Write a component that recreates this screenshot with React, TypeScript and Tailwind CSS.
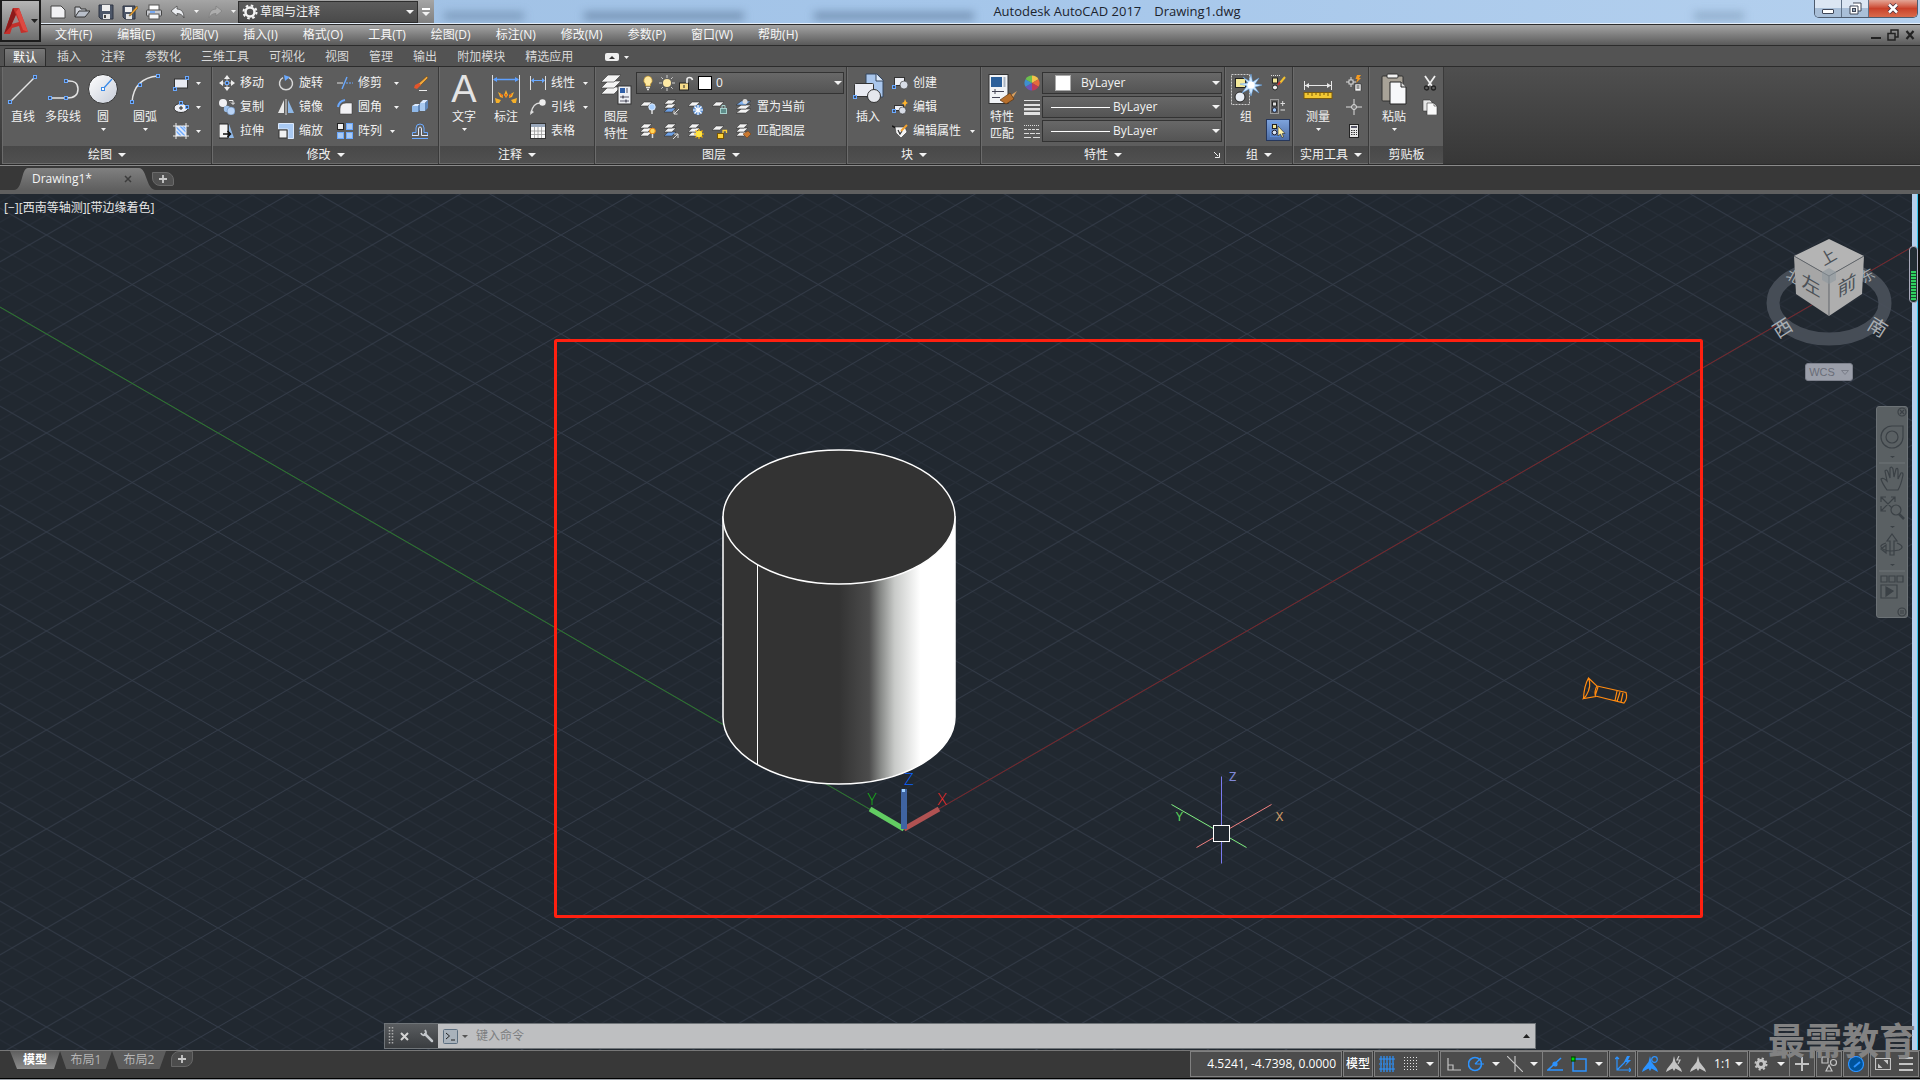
import { ReactNode } from 'react';

const MINOR = [-4, -3, -2, -1, 1, 2, 3, 4];
const GRID_W = 171.5;
const GRID_H = 99;

const BLUE = '#6aa9ff';

function Arrow({ big = false }: { big?: boolean }) {
  return (
    <svg width={big ? 8 : 5} height={big ? 4 : 3} viewBox="0 0 8 4" preserveAspectRatio="none" className="shrink-0">
      <path d="M0 0H8L4 4Z" fill="#f2f2f2" />
    </svg>
  );
}

function Grip({ x, y }: { x: number; y: number }) {
  return <rect x={x - 1.5} y={y - 1.5} width="3" height="3" fill="#3d4d66" stroke={BLUE} />;
}

function Sheet({ x = 0, y = 0, fill = '#f4f4f4', w = 12, h = 4 }: { x?: number; y?: number; fill?: string; w?: number; h?: number }) {
  return (
    <path
      d={`M${x + w * 0.35} ${y}H${x + w}L${x + w * 0.65} ${y + h}H${x}Z`}
      fill={fill}
      stroke="#333"
      strokeWidth="0.6"
    />
  );
}

function Stack({ fill = '#f4f4f4' }: { fill?: string }) {
  return (
    <g>
      <Sheet y={9} fill={fill} />
      <Sheet y={5} />
      <Sheet y={1} />
    </g>
  );
}

const sun = 'M0-5V5M-5 0H5M-3.5-3.5L3.5 3.5M3.5-3.5L-3.5 3.5';

const small: Record<string, ReactNode> = {
  rect: (
    <>
      <rect x="1.5" y="4" width="13" height="9" fill="#e9ebf2" stroke="#333" />
      <Grip x={2} y={14} />
      <Grip x={14} y={3} />
    </>
  ),
  ellipse: (
    <>
      <ellipse cx="8" cy="9" rx="7" ry="4.5" fill="#eceef4" stroke="#333" />
      <path d="M6 9H10M8 7V11" stroke="#222" />
      <Grip x={8} y={4} />
      <Grip x={14} y={8} />
    </>
  ),
  hatch: (
    <>
      <rect x="3" y="3" width="10" height="10" fill="#dfe8f8" />
      <path d="M3 8L8 13M3 4L12 13M7 3L13 9M10 3L13 6" stroke={BLUE} strokeWidth="1.4" />
      <path d="M3 0V16M13 0V16M0 3H16M0 13H16" stroke="#eee" />
    </>
  ),
  move: (
    <>
      <path d="M8 0L11 4H5ZM8 16L11 12H5ZM0 8L4 5V11ZM16 8L12 5V11Z" fill="#eee" />
      <path d="M8 4V6M8 10V12M4 8H6M10 8H12" stroke="#ccc" />
      <Grip x={8} y={8} />
    </>
  ),
  rotate: (
    <>
      <path d="M11 2.6A6.5 6.5 0 1 1 5 2.6" fill="none" stroke="#d8d8d8" strokeWidth="1.5" />
      <path d="M6 0L12 2L7 6Z" fill={BLUE} />
    </>
  ),
  trim: (
    <>
      <path d="M0 8H6" stroke="#ddd" />
      <path d="M5 14L10 2" stroke={BLUE} strokeWidth="1.4" />
      <path d="M9 8H16" stroke={BLUE} strokeDasharray="2 1" />
    </>
  ),
  erase: (
    <>
      <path d="M15 1L6 9L8 11L16 3Z" fill="#f0a83c" stroke="#5d3a10" strokeWidth="0.5" />
      <path d="M7 8L9 10L5 14L2 13L3 10Z" fill="#e3552b" />
      <path d="M7 15.5H15" stroke="#eee" />
    </>
  ),
  copy: (
    <>
      <circle cx="4" cy="4" r="4" fill="#f0f0f3" />
      <circle cx="8" cy="10" r="3.2" fill="#9dc0ea" />
      <circle cx="12" cy="12" r="4" fill="#b9d3f4" stroke="#5a7faf" strokeWidth="0.5" />
      <path d="M10 1.5H14V5M12 3.5L14 5.5L16 3.5" fill="none" stroke="#eee" />
    </>
  ),
  mirror: (
    <>
      <path d="M6 1V14H0Z" fill="#e9e9e9" />
      <path d="M10 1V14H16Z" fill="#8fb8e6" />
      <path d="M8 0V16" stroke="#ddd" />
    </>
  ),
  fillet: (
    <>
      <path d="M3 15V10Q3 4 9 4H15V15Z" fill="#f1f1f4" stroke="#333" strokeWidth="0.5" />
      <path d="M1 8Q2 2 8 1" fill="none" stroke={BLUE} strokeWidth="2" />
    </>
  ),
  explode: (
    <>
      <path d="M0 7L3 5H8L6 7Z" fill="#dcebff" />
      <path d="M0 7H6V13H0Z" fill="#8fb8e8" />
      <path d="M6 7L8 5V11L6 13Z" fill="#5f86b8" />
      <path d="M8 4L11 1H16L13 4Z" fill="#dcebff" />
      <path d="M8 4H13V12H8Z" fill="#a9caf0" />
      <path d="M13 4L16 1V9L13 12Z" fill="#5f86b8" />
    </>
  ),
  stretch: (
    <>
      <path d="M0 1H9V15H0Z" fill="#f3f3f3" stroke="#222" />
      <path d="M10 1L15 15H10Z" fill="#8fb8e8" />
      <path d="M4 11H11M8.500 8L11.500 11L8.500 14" stroke="#111" fill="none" strokeWidth="1.5" />
    </>
  ),
  scale: (
    <>
      <path d="M0.500 0.500H15.500V15.500H10V6H0.500Z" fill="#a9c9f2" stroke="#dbe8fb" />
      <rect x="1" y="7" width="8" height="8" fill="#f2f2f2" stroke="#333" />
    </>
  ),
  array: (
    <>
      <rect x="0.500" y="0.500" width="6" height="6" fill="#f0f0f0" stroke="#222" />
      <rect x="9.500" y="0.500" width="6" height="6" fill="#a9c9f2" stroke={BLUE} />
      <rect x="0.500" y="9.500" width="6" height="6" fill="#a9c9f2" stroke={BLUE} />
      <rect x="9.500" y="9.500" width="6" height="6" fill="#a9c9f2" stroke={BLUE} />
    </>
  ),
  offset: (
    <>
      <path d="M0 15.500H16M0.500 12.500V9.500H4V5Q4 1 8 1T12 5V9.500H15.500V12.500" fill="none" stroke={BLUE} />
      <path d="M0 12.500H6.500V6Q6.500 4 8 4T9.500 6V12.500H16" fill="none" stroke="#dfe8f8" />
    </>
  ),
  linear: (
    <>
      <path d="M0.500 1V15M15.500 1V15" stroke="#ddd" />
      <path d="M2 5.500H14" stroke={BLUE} />
      <path d="M1 5.500L4 3V8ZM15 5.500L12 3V8Z" fill={BLUE} />
    </>
  ),
  leader: (
    <>
      <path d="M1 14Q3 4 10 4" fill="none" stroke="#ddd" strokeWidth="1.300" />
      <path d="M0 16L1 11L4 13Z" fill="#ddd" />
      <circle cx="12.500" cy="3.500" r="3.200" fill="#eee" />
    </>
  ),
  table: (
    <>
      <rect x="0.500" y="0.500" width="15" height="15" fill="#fafafa" stroke="#333" />
      <rect x="1" y="1" width="14" height="3" fill="#9aa8bb" />
      <path d="M1 8H15M1 11.500H15M4.500 4V15M8 4V15M11.500 4V15" stroke="#999" strokeWidth="0.800" />
    </>
  ),
  layoff: (
    <>
      <Sheet x={0} y={3} />
      <circle cx="12" cy="8" r="3.200" fill="#a9d0ff" stroke="#dcebff" />
      <path d="M12 11V15" stroke="#ddd" strokeWidth="1.500" />
    </>
  ),
  layiso: (
    <>
      <Stack fill="#6ea2e8" />
      <path d="M15 10L10 15M10 11.500V15H13.500" stroke="#ddd" fill="none" />
    </>
  ),
  layfreeze: (
    <>
      <Sheet x={0} y={3} />
      <circle cx="10" cy="11" r="5" fill="#5d92d8" />
      <path d={sun} transform="translate(10 11)" stroke="#fff" strokeWidth="1.200" />
    </>
  ),
  laylock: (
    <>
      <Sheet x={0} y={3} />
      <rect x="8.500" y="9.500" width="6" height="5" fill="#5f8d8a" stroke="#a5d0cc" />
      <path d="M10 9V6.500H13V9" stroke="#a5d0cc" fill="none" />
    </>
  ),
  laycur: (
    <>
      <Sheet y={10} w={15} />
      <Sheet y={6} w={15} />
      <Sheet y={2} w={15} fill="#7db0f0" />
      <circle cx="9" cy="2.500" r="2.500" fill="#ddd" />
    </>
  ),
  layon: (
    <>
      <Stack />
      <circle cx="12.500" cy="8" r="2.800" fill="#ffd75a" stroke="#f08a10" />
      <path d="M12.500 11V15" stroke="#ddd" strokeWidth="1.500" />
    </>
  ),
  layuniso: (
    <>
      <Stack fill="#6ea2e8" />
      <path d="M9 16L14 11M10 11H14V15" stroke="#ddd" fill="none" />
    </>
  ),
  laythaw: (
    <>
      <Stack />
      <path d={sun} transform="translate(11 11)" stroke="#f5a800" strokeWidth="1.200" />
      <circle cx="11" cy="11" r="3.200" fill="#ffe640" />
    </>
  ),
  layunlock: (
    <>
      <Sheet x={0} y={3} />
      <rect x="5.500" y="10.500" width="6" height="5" fill="#ffd23a" stroke="#7a5600" />
      <path d="M11 10V7.500H14.500V10" stroke="#ffd23a" fill="none" strokeWidth="1.300" />
    </>
  ),
  laymatch: (
    <>
      <Stack />
      <path d="M7 11L12 8L15 11L11 15Z" fill="#c97830" stroke="#6b3a10" strokeWidth="0.500" />
    </>
  ),
  create: (
    <>
      <rect x="2.500" y="2.500" width="10" height="8" fill="#eceef4" stroke="#333" />
      <circle cx="12" cy="10" r="4" fill="#d7dce6" stroke="#333" strokeWidth="0.600" />
      <Grip x={2} y={12} />
    </>
  ),
  edit: (
    <>
      <rect x="2.500" y="6.500" width="9" height="5" fill="#eceef4" stroke="#333" />
      <circle cx="10.500" cy="11.500" r="3.500" fill="#d7dce6" stroke="#333" strokeWidth="0.600" />
      <path d="M13 0L14.300 3L16 4L14 5L13 8L11.700 5L9.500 4.300L12 3Z" fill="#ffb52e" />
      <Grip x={2} y={12} />
    </>
  ),
  attr: (
    <>
      <path d="M0 3L4 5" stroke="#111" strokeWidth="1.500" />
      <path d="M3 4H13L15 9L9 15L4 10Z" fill="#f3f3f3" stroke="#333" strokeWidth="0.600" />
      <path d="M6 7L8 11L10 8" fill="none" stroke="#333" strokeWidth="1.200" />
      <path d="M15 2L9 8" stroke="#f0a030" strokeWidth="2" />
    </>
  ),
  wheel: (
    <>
      <path d="M8 8V0.500A7.500 7.500 0 0 1 14.500 4.200Z" fill="#f2c24a" />
      <path d="M8 8L14.500 4.200A7.500 7.500 0 0 1 14.500 11.800Z" fill="#e56a3d" />
      <path d="M8 8L14.500 11.800A7.500 7.500 0 0 1 8 15.500Z" fill="#c03a55" />
      <path d="M8 8V15.500A7.500 7.500 0 0 1 1.500 11.800Z" fill="#6a54b8" />
      <path d="M8 8L1.500 11.800A7.500 7.500 0 0 1 1.500 4.200Z" fill="#3f8fd0" />
      <path d="M8 8L1.500 4.200A7.500 7.500 0 0 1 8 0.500Z" fill="#6cc04e" />
    </>
  ),
  weights: <path d="M0 1H16V2H0ZM0 5H16V7H0ZM0 9H16V11.500H0ZM0 13H16V16H0Z" fill="#e2e2e2" />,
  types: (
    <>
      <path d="M0 2.500H16" stroke="#ddd" strokeDasharray="1 1" />
      <path d="M0 6.500H16" stroke="#ddd" strokeDasharray="3 1" />
      <path d="M0 10.500H16" stroke="#ddd" strokeDasharray="5 1" />
      <path d="M0 14.500H16" stroke="#ddd" strokeDasharray="7 2" />
    </>
  ),
  gedit: (
    <>
      <path d="M1 0.500H10" stroke="#ddd" strokeDasharray="1 1" />
      <rect x="2.500" y="3" width="5" height="5" fill="#f3e99a" stroke="#222" />
      <circle cx="5" cy="12.500" r="2.500" fill="#f0f0f0" stroke="#222" />
      <path d="M15 2L10 8" stroke="#f0c030" strokeWidth="2" />
      <path d="M10 7L8 10" stroke="#d03030" strokeWidth="2" />
    </>
  ),
  gadd: (
    <>
      <rect x="0.500" y="0.500" width="8" height="14" fill="none" stroke="#ddd" strokeDasharray="1 1" />
      <rect x="2.500" y="3" width="4" height="4" fill="#ddd" stroke="#222" />
      <circle cx="4.500" cy="11" r="2.300" fill="#9cc4f4" stroke="#223" />
      <path d="M10.500 4.500H15M12.700 2V7M10.500 11H15" stroke="#ddd" />
    </>
  ),
  gsel: (
    <>
      <rect x="0.500" y="0.500" width="9" height="14" fill="none" stroke="#5ea0ff" strokeDasharray="1 1" />
      <rect x="2.500" y="2.500" width="4" height="4" fill="#f3e99a" stroke="#222" />
      <circle cx="4.500" cy="10.500" r="2.300" fill="#d8e4f4" stroke="#223" />
      <path d="M8 4V14L10.500 12L12 15.500L13.500 15L12.300 11.500H15Z" fill="#fff3a8" stroke="#222" strokeWidth="0.600" />
    </>
  ),
  quick: (
    <>
      <path d="M0 7H10M5 2V12" stroke="#ddd" />
      <rect x="3" y="5" width="4" height="4" fill="#555" stroke="#ddd" />
      <path d="M11 0H15L13 3H15L10 8L11.500 4H9.500Z" fill="#f59a20" />
      <rect x="9" y="9" width="6" height="7" fill="#f4f4f4" stroke="#222" strokeWidth="0.500" />
      <path d="M10.500 11H13.500M10.500 13H13.500" stroke="#333" />
    </>
  ),
  point: (
    <>
      <path d="M8 0V16M0 8H16" stroke="#ddd" />
      <circle cx="8" cy="8" r="2.500" fill="#777" stroke="#ddd" />
    </>
  ),
  calc: (
    <>
      <rect x="3.500" y="1.500" width="9" height="13" fill="#e8e8e8" stroke="#222" />
      <rect x="5" y="3" width="6" height="2" fill="#556" />
      <path d="M5 7.500H11M5 9.500H11M5 11.500H11" stroke="#333" strokeDasharray="1.500 1" />
    </>
  ),
  cut: (
    <>
      <path d="M3 1L10 11M13 1L6 11" stroke="#f0f0f0" strokeWidth="1.800" />
      <circle cx="4.500" cy="13" r="2" fill="none" stroke="#222" strokeWidth="1.300" />
      <circle cx="11.500" cy="13" r="2" fill="none" stroke="#222" strokeWidth="1.300" />
    </>
  ),
  copyclip: (
    <>
      <path d="M1 1H8L10 3V12H1Z" fill="#e6e6e6" stroke="#333" strokeWidth="0.600" />
      <path d="M5 4H12L15 7V16H5Z" fill="#fafafa" stroke="#333" strokeWidth="0.600" />
      <path d="M12 4V7H15" fill="none" stroke="#333" strokeWidth="0.600" />
    </>
  ),
  new: <path d="M1 2H11L15 6V14H1Z" fill="#f1f1f3" stroke="#444" />,
  open: (
    <>
      <path d="M1 13V3H6L7 5H12V7" fill="#cfd3da" stroke="#333" />
      <path d="M1 13L5 7H16L11 13Z" fill="#b9bfc9" stroke="#333" />
    </>
  ),
  save: (
    <>
      <path d="M1 1H15V15H3L1 13Z" fill="#4c5668" stroke="#2c3340" />
      <rect x="4" y="1" width="8" height="6" fill="#eee" />
      <rect x="5" y="10" width="7" height="5" fill="#e3e3e3" />
      <rect x="6" y="11" width="2" height="3" fill="#444" />
    </>
  ),
  saveas: (
    <>
      <path d="M1 2H13V15H3L1 13Z" fill="#4c5668" stroke="#2c3340" />
      <rect x="3" y="3" width="7" height="5" fill="#eee" />
      <rect x="4" y="10" width="6" height="5" fill="#e3e3e3" />
      <path d="M15 2L8 10L7 12L9 11.500L16 4Z" fill="#f0a030" stroke="#553" strokeWidth="0.500" />
    </>
  ),
  print: (
    <>
      <rect x="3" y="1" width="10" height="6" fill="#fff" stroke="#555" />
      <rect x="0.500" y="6" width="15" height="6" rx="1" fill="#c9cbd0" stroke="#444" />
      <rect x="3" y="10" width="10" height="5" fill="#f6f6f6" stroke="#555" />
      <path d="M4 8H9" stroke="#5ea0ff" strokeWidth="1.500" />
    </>
  ),
  undo: <path d="M1 7L7 2V5Q14 5 14 14Q12 9.500 7 9.500V12Z" fill="#eceef2" stroke="#444" strokeWidth="0.700" />,
  redo: <path d="M15 7L9 2V5Q2 5 2 14Q4 9.500 9 9.500V12Z" fill="#adadad" stroke="#7c7c7c" strokeWidth="0.700" />,
  gear: (
    <>
      <circle cx="8" cy="8" r="4.500" fill="none" stroke="#f4f4f4" strokeWidth="2.500" />
      <circle cx="8" cy="8" r="6.500" fill="none" stroke="#f4f4f4" strokeWidth="2" strokeDasharray="2.550 2.550" />
    </>
  ),
  bulb: (
    <>
      <path d="M8 1A4.500 4.500 0 0 1 10.500 9V11H5.500V9A4.500 4.500 0 0 1 8 1Z" fill="#ffe9a0" stroke="#b88a20" strokeWidth="0.600" />
      <path d="M6 12.500H10M7 14.500H9" stroke="#ddd" strokeWidth="1.300" />
    </>
  ),
  sun: (
    <>
      <path d="M8 0V3M8 13V16M0 8H3M13 8H16M2.300 2.300L4 4M12 12L13.700 13.700M13.700 2.300L12 4M4 12L2.300 13.700" stroke="#ddd" strokeWidth="0.900" />
      <circle cx="8" cy="8" r="4" fill="#ffeaa5" />
    </>
  ),
  lock: (
    <>
      <rect x="1.500" y="8" width="9" height="7" fill="#f7dc8a" stroke="#222" />
      <path d="M9 8V4.500Q9 2.500 11.500 2.500T14.500 5" fill="none" stroke="#eee" strokeWidth="1.600" />
      <path d="M6 10V13" stroke="#222" />
    </>
  ),
};

const large: Record<string, ReactNode> = {
  line: (
    <>
      <path d="M3 29L28 4" stroke="#e4e4e4" strokeWidth="1.500" />
      <Grip x={3} y={29} />
      <Grip x={28} y={4} />
    </>
  ),
  pline: (
    <>
      <path d="M3 25H20Q31 25 31 16T20 8" fill="none" stroke="#e4e4e4" strokeWidth="1.500" />
      <Grip x={3} y={25} />
      <Grip x={19} y={25} />
      <Grip x={19} y={8} />
    </>
  ),
  circle: (
    <>
      <circle cx="16" cy="16" r="14.500" fill="url(#disc)" stroke="#333" />
      <path d="M16 16L25 6" stroke="#3a8ae8" strokeWidth="1.300" />
      <rect x="14.500" y="14.500" width="3" height="3" fill="#fff" stroke="#3a8ae8" />
    </>
  ),
  arc: (
    <>
      <path d="M3 29Q5 5 29 3" fill="none" stroke="#e4e4e4" strokeWidth="1.500" />
      <Grip x={3} y={29} />
      <Grip x={11} y={12} />
      <Grip x={29} y={3} />
    </>
  ),
  dim: (
    <>
      <path d="M2.500 2V30M29.500 2V30" stroke="#ddd" />
      <path d="M4 6.500H28" stroke="#5ea0ff" strokeWidth="1.500" />
      <path d="M3 6.500L7 4V9ZM29 6.500L25 4V9Z" fill="#5ea0ff" />
      <path d="M16 17L18 22L16 25L14 22ZM8 19L13 22L13 25L10 24ZM24 19L19 22V25L22 24ZM5 25L11 27L9 30H6ZM27 25L21 27L23 30H26Z" fill="#f5b02a" />
      <path d="M15 21L16 25L17 21ZM10 21L13 25L12 21ZM22 21L19 25L20 21Z" fill="#e8601a" />
    </>
  ),
  layers: (
    <>
      <Sheet x={1} y={14} w={20} h={7} />
      <Sheet x={1} y={8} w={20} h={7} />
      <Sheet x={1} y={2} w={20} h={7} />
      <rect x="18" y="13" width="13" height="18" fill="#eef0f4" stroke="#333" />
      <rect x="20" y="15" width="5" height="5" fill="#2f5fa8" />
      <path d="M27 15V20M20 24H29M20 28H29" stroke="#556" />
      <path d="M23 22.500V25.500M26 26.500V29.500" stroke="#223" />
    </>
  ),
  insert: (
    <>
      <path d="M14 1H25L31 7V24H14Z" fill="#a9c6ec" stroke="#34465e" />
      <path d="M24 1V8H31" fill="#dfeaf9" stroke="#34465e" />
      <rect x="2.500" y="10.500" width="19" height="13" rx="1" fill="#e9ebf2" stroke="#333" />
      <circle cx="22" cy="23" r="6.500" fill="#e5e7ec" stroke="#333" />
      <Grip x={3} y={24} />
    </>
  ),
  match: (
    <>
      <rect x="3" y="1.500" width="19" height="29" fill="#f1f3f6" stroke="#333" />
      <rect x="5" y="4" width="11" height="10" fill="#2b5f9a" />
      <path d="M18.500 4V14" stroke="#aab4c2" strokeWidth="2" />
      <path d="M6 18.500H18M6 24.500H14M9 16V21" stroke="#445" />
      <path d="M31 18L25 22L27 24.500Z" fill="#d8a060" />
      <path d="M24 20L28 26L20 31L14 27Z" fill="#b8702c" stroke="#5c3410" strokeWidth="0.700" />
    </>
  ),
  group: (
    <>
      <rect x="1.500" y="1.500" width="18" height="30" fill="none" stroke="#ccc" strokeDasharray="2 1" />
      <rect x="5.500" y="5.500" width="10" height="9" fill="#f3e99a" stroke="#222" />
      <circle cx="10" cy="24" r="5" fill="#e9eef5" stroke="#222" />
      <path d="M21 1L22.500 9L29 5L25 11L32 12L25 14L29 20L23 16L21 23L19 16L12 20L17 13L10 11L18 10L13 4L19 8Z" fill="#cfe8ff" stroke="#5ea0e8" strokeWidth="0.500" />
      <circle cx="21" cy="12" r="3.500" fill="#fff" />
    </>
  ),
  measure: (
    <>
      <path d="M2.500 8V17M29.500 8V17M3 12.500H29" stroke="#e8e8e8" />
      <path d="M3 12.500L7 10V15ZM29 12.500L25 10V15Z" fill="#e8e8e8" />
      <rect x="2" y="19.500" width="28" height="6" fill="#f2c832" stroke="#7a5a10" />
      <path d="M6 20V22M10 20V23M14 20V22M18 20V23M22 20V22M26 20V23" stroke="#7a5a10" />
    </>
  ),
  paste: (
    <>
      <rect x="4" y="3" width="21" height="25" rx="1" fill="#a8a297" stroke="#333" />
      <rect x="9" y="1" width="11" height="4" rx="1" fill="#f2f2f2" stroke="#333" />
      <path d="M12 9H23L28 14V31H12Z" fill="#f7f8fa" stroke="#222" />
      <path d="M23 9V14H28" fill="#ddd" stroke="#222" />
    </>
  ),
};

function Icon({ name }: { name: string }) {
  return (
    <svg width="16" height="16" viewBox="0 0 16 16" className="shrink-0">
      {small[name]}
    </svg>
  );
}

function SmallButton({ icon, label, arrow }: { icon: string; label?: string; arrow?: boolean }) {
  return (
    <button aria-label={label ?? icon} className="flex h-6 shrink-0 items-center whitespace-nowrap">
      <Icon name={icon} />
      {label && <span className="ml-[5px]">{label}</span>}
      {arrow && (
        <span className="ml-auto">
          <Arrow />
        </span>
      )}
    </button>
  );
}

function BigButton({ icon, lines, arrow, className }: { icon: string; lines: string[]; arrow?: boolean; className: string }) {
  return (
    <button className={`flex shrink-0 flex-col items-center self-start pt-[6px] leading-[17px] ${className}`}>
      {icon === 'text' ? (
        <span className="h-8 font-['Liberation_Sans'] text-[38px] leading-8 text-[#e4e4e4]">A</span>
      ) : (
        <svg width="32" height="32" viewBox="0 0 32 32">
          {large[icon]}
        </svg>
      )}
      <span className="mt-[3px] flex flex-col">
        {lines.map((l) => (
          <span key={l}>{l}</span>
        ))}
      </span>
      {arrow && (
        <span className="mt-[2px] flex h-[5px] items-center">
          <Arrow />
        </span>
      )}
    </button>
  );
}

function Panel({ title, arrow = true, launcher, className, children }: {
  title: string;
  arrow?: boolean;
  launcher?: boolean;
  className: string;
  children: ReactNode;
}) {
  return (
    <section className={`flex shrink-0 flex-col border-r border-[#3a3a3a] bg-[#5d5d5d] ${className}`}>
      <div className="flex h-[79px] border-l border-[#6b6b6b]">{children}</div>
      <button className="relative flex h-[18px] items-center justify-center gap-[6px] border-b border-l border-[#6b6b6b] bg-linear-to-b from-[#484848] to-[#505050]">
        {title}
        {arrow && <Arrow big />}
        {launcher && (
          <svg width="6" height="6" className="absolute right-1">
            <path d="M0 0L4 4M5.500 1V5.500H1" stroke="#eee" fill="none" />
          </svg>
        )}
      </button>
    </section>
  );
}

function Combo({ label, value, className, children }: { label: string; value: string; className: string; children?: ReactNode }) {
  return (
    <label className={`flex items-center border border-[#333] bg-linear-to-b from-[#686868] to-[#545454] pr-px ${className}`}>
      {children}
      <select aria-label={label} className="min-w-0 flex-1 appearance-none bg-transparent text-[#f2f2f2] outline-none">
        <option>{value}</option>
      </select>
      <Arrow big />
    </label>
  );
}

const MENUS = ['文件(F)', '编辑(E)', '视图(V)', '插入(I)', '格式(O)', '工具(T)', '绘图(D)', '标注(N)', '修改(M)', '参数(P)', '窗口(W)', '帮助(H)'];
const TABS = ['插入', '注释', '参数化', '三维工具', '可视化', '视图', '管理', '输出', '附加模块', '精选应用'];

function TitleBar() {
  return (
    <div className="flex h-[24px] border-b border-[#e4eefa] bg-linear-to-r from-[#9fbfe2] via-[#a5c6ea] to-[#b4d0ee]">
      <div className="flex h-full items-center bg-linear-to-b from-[#a5a5a5] to-[#808080] pl-[50px]">
        {['new', 'open', 'save', 'saveas', 'print'].map((n) => (
          <button key={n} aria-label={n} className="mr-2">
            <Icon name={n} />
          </button>
        ))}
        <button aria-label="undo" className="mr-2 flex items-center gap-2">
          <Icon name="undo" />
          <Arrow />
        </button>
        <button aria-label="redo" className="mr-[2px] flex items-center gap-2">
          <Icon name="redo" />
          <Arrow />
        </button>
        <label className="flex h-[22px] w-[180px] items-center gap-[2px] border border-[#2e2e2e] bg-linear-to-b from-[#5c5c5c] to-[#4a4a4a] px-[3px]">
          <Icon name="gear" />
          <select aria-label="工作空间" className="min-w-0 flex-1 appearance-none bg-transparent text-[#f4f4f4] outline-none">
            <option>草图与注释</option>
          </select>
          <Arrow big />
        </label>
        <button aria-label="自定义" className="flex h-full w-[16px] flex-col items-center justify-center gap-[2px]">
          <span className="h-[2px] w-2 bg-white" />
          <Arrow big />
        </button>
      </div>
      <div className="relative flex flex-1 justify-center gap-[13px] overflow-hidden pr-[14px] text-[13px] leading-[23px] text-[#1c242e]">
        <span className="absolute top-[12px] left-[10px] h-2 w-[80px] bg-[#47627f]/40 blur-[4px]" />
        <span className="absolute top-[12px] left-[150px] h-2 w-[160px] bg-[#47627f]/50 blur-[4px]" />
        <span className="absolute top-[12px] left-[380px] h-2 w-[160px] bg-[#47627f]/50 blur-[4px]" />
        <span className="absolute top-[12px] right-[70px] h-2 w-[50px] bg-[#47627f]/30 blur-[4px]" />
        <span className="relative">Autodesk AutoCAD 2017</span>
        <span className="relative">Drawing1.dwg</span>
      </div>
      <div className="mr-[2px] flex h-[18px] shrink-0 overflow-hidden rounded-b-[5px] border border-t-0 border-[#4d5b6e]">
        <button aria-label="最小化" className="flex w-[27px] items-center justify-center border-r border-[#5f7187] bg-linear-to-b from-[#dbe6f3] from-50% to-[#a9bfd8] to-50%">
          <span className="mt-[5px] h-[5px] w-3 rounded-[1px] border border-[#3e4657] bg-white" />
        </button>
        <button aria-label="还原" className="flex w-[27px] items-center justify-center border-r border-[#5f7187] bg-linear-to-b from-[#dbe6f3] from-50% to-[#a9bfd8] to-50%">
          <svg width="13" height="13">
            <path d="M4 1H12V9H9M1 4H9V12H1Z" fill="#fff" stroke="#3e4657" />
            <rect x="3.500" y="6.500" width="3" height="3" fill="#9ab" stroke="#3e4657" />
          </svg>
        </button>
        <button aria-label="关闭" className="flex w-[48px] items-center justify-center bg-linear-to-b from-[#e3a596] via-[#c9412a] via-50% to-[#d96a4c]">
          <svg width="12" height="11">
            <path d="M2 1.500L10 9.500M10 1.500L2 9.500" stroke="#4a3040" strokeWidth="4" />
            <path d="M2 1.500L10 9.500M10 1.500L2 9.500" stroke="#fff" strokeWidth="2.500" />
          </svg>
        </button>
      </div>
    </div>
  );
}

function MenuBar() {
  return (
    <nav className="flex h-[22px] items-center gap-[25px] border-y border-[#2c2c2c] bg-linear-to-b from-[#a4a4a4] to-[#5a5a5a] pr-[5px] pl-[55px] text-[#f6f6f6]">
      {MENUS.map((m) => (
        <button key={m} className="whitespace-nowrap">
          {m}
        </button>
      ))}
      <div className="ml-auto flex items-center gap-[6px]">
        <button aria-label="最小化图形" className="mt-[6px] h-[2px] w-[10px] bg-[#222]" />
        <button aria-label="还原图形">
          <svg width="12" height="12" className="block">
            <path d="M4 4V1H11V8H8M1 4.500H8V11H1Z" fill="none" stroke="#222" strokeWidth="1.500" />
          </svg>
        </button>
        <button aria-label="关闭图形">
          <svg width="10" height="10" className="block">
            <path d="M1.500 1L8.500 9M8.500 1L1.500 9" stroke="#222" strokeWidth="2.200" />
          </svg>
        </button>
      </div>
    </nav>
  );
}

function RibbonTabs() {
  return (
    <div className="flex h-[21px] items-center gap-5 border-b border-[#2c2c2c] bg-[#535353] pt-[2px] text-[#d8d8d8]">
      <button className="-mr-[9px] ml-1 h-[18px] w-[42px] rounded-t-[2px] border border-b-0 border-[#2c2c2c] bg-linear-to-b from-[#777] to-[#5d5d5d] leading-[16px] text-white">
        默认
      </button>
      {TABS.map((t) => (
        <button key={t} className="whitespace-nowrap">
          {t}
        </button>
      ))}
      <button aria-label="功能区" className="ml-3 flex items-center gap-[5px]">
        <span className="flex h-2 w-[14px] items-center justify-center rounded-[2px] bg-[#eee]">
          <svg width="6" height="3">
            <path d="M3 0L6 3H0Z" fill="#333" />
          </svg>
        </span>
        <Arrow />
      </button>
    </div>
  );
}

function Ribbon() {
  return (
    <div className="flex h-[98px] border-b border-[#2a2a2a] bg-linear-to-b from-[#4f4f4f] to-[#373737] pl-[2px] text-[#f2f2f2]">
      <Panel title="绘图" className="w-[210px]">
        <BigButton icon="line" lines={['直线']} className="w-[40px]" />
        <BigButton icon="pline" lines={['多段线']} className="w-[40px]" />
        <BigButton icon="circle" lines={['圆']} arrow className="w-[40px]" />
        <BigButton icon="arc" lines={['圆弧']} arrow className="w-[44px]" />
        <div className="ml-[6px] flex w-[28px] flex-col pt-1">
          <SmallButton icon="rect" arrow />
          <SmallButton icon="ellipse" arrow />
          <SmallButton icon="hatch" arrow />
        </div>
      </Panel>

      <Panel title="修改" className="w-[227px]">
        <div className="flex flex-1 pt-1 pl-[6px]">
          <div className="flex w-[59px] flex-col">
            <SmallButton icon="move" label="移动" />
            <SmallButton icon="copy" label="复制" />
            <SmallButton icon="stretch" label="拉伸" />
          </div>
          <div className="flex w-[59px] flex-col">
            <SmallButton icon="rotate" label="旋转" />
            <SmallButton icon="mirror" label="镜像" />
            <SmallButton icon="scale" label="缩放" />
          </div>
          <div className="flex w-[62px] flex-col">
            <SmallButton icon="trim" label="修剪" arrow />
            <SmallButton icon="fillet" label="圆角" arrow />
            <div className="flex w-[58px] flex-col">
              <SmallButton icon="array" label="阵列" arrow />
            </div>
          </div>
          <div className="ml-[13px] flex flex-col">
            <SmallButton icon="erase" />
            <SmallButton icon="explode" />
            <SmallButton icon="offset" />
          </div>
        </div>
      </Panel>

      <Panel title="注释" className="w-[156px]">
        <BigButton icon="text" lines={['文字']} arrow className="w-[48px]" />
        <BigButton icon="dim" lines={['标注']} className="w-[36px]" />
        <div className="ml-[6px] flex w-[58px] flex-col pt-1">
          <SmallButton icon="linear" label="线性" arrow />
          <SmallButton icon="leader" label="引线" arrow />
          <SmallButton icon="table" label="表格" />
        </div>
      </Panel>

      <Panel title="图层" className="w-[252px]">
        <BigButton icon="layers" lines={['图层', '特性']} className="w-[40px]" />
        <div className="flex flex-1 flex-col pr-[2px]">
          <Combo label="图层" value="0" className="mt-[5px] h-[22px] w-full gap-1 pl-[3px]">
            <span className="flex gap-[3px]">
              <Icon name="bulb" />
              <Icon name="sun" />
              <Icon name="lock" />
            </span>
            <span className="size-[14px] border border-black bg-white" />
          </Combo>
          <div className="flex gap-2 pt-px pl-1">
            <SmallButton icon="layoff" />
            <SmallButton icon="layiso" />
            <SmallButton icon="layfreeze" />
            <SmallButton icon="laylock" />
            <SmallButton icon="laycur" label="置为当前" />
          </div>
          <div className="flex gap-2 pl-1">
            <SmallButton icon="layon" />
            <SmallButton icon="layuniso" />
            <SmallButton icon="laythaw" />
            <SmallButton icon="layunlock" />
            <SmallButton icon="laymatch" label="匹配图层" />
          </div>
        </div>
      </Panel>

      <Panel title="块" className="w-[134px]">
        <BigButton icon="insert" lines={['插入']} className="w-[40px]" />
        <div className="ml-1 flex w-[83px] flex-col pt-1">
          <SmallButton icon="create" label="创建" />
          <SmallButton icon="edit" label="编辑" />
          <SmallButton icon="attr" label="编辑属性" arrow />
        </div>
      </Panel>

      <Panel title="特性" launcher className="w-[244px]">
        <BigButton icon="match" lines={['特性', '匹配']} className="w-[40px]" />
        <div className="ml-[2px] flex w-[16px] flex-col pt-1">
          <SmallButton icon="wheel" />
          <SmallButton icon="weights" />
          <SmallButton icon="types" />
        </div>
        <div className="flex flex-1 flex-col gap-[2px] pt-[5px] pr-[2px] pl-[2px]">
          <Combo label="颜色" value="ByLayer" className="h-[22px] gap-[10px] pl-3">
            <span className="size-4 border border-[#aaa] bg-white" />
          </Combo>
          <Combo label="线宽" value="ByLayer" className="h-[22px] gap-[3px] pl-2">
            <span className="h-px w-[59px] bg-white" />
          </Combo>
          <Combo label="线型" value="ByLayer" className="h-[22px] gap-[3px] pl-2">
            <span className="h-px w-[59px] bg-white" />
          </Combo>
        </div>
      </Panel>

      <Panel title="组" className="w-[68px]">
        <BigButton icon="group" lines={['组']} className="w-[40px]" />
        <div className="flex flex-col pt-1">
          <button aria-label="编辑组" className="flex h-6 w-6 items-center justify-center"><Icon name="gedit" /></button>
          <button aria-label="添加到组" className="flex h-6 w-6 items-center justify-center"><Icon name="gadd" /></button>
          <button aria-label="组选择" className="flex h-[22px] w-6 items-center justify-center border border-[#26375c] bg-linear-to-b from-[#7ea3dc] to-[#4e6ea6]">
            <Icon name="gsel" />
          </button>
        </div>
      </Panel>

      <Panel title="实用工具" className="w-[76px]">
        <BigButton icon="measure" lines={['测量']} arrow className="w-[48px]" />
        <div className="ml-1 flex flex-col pt-1">
          <SmallButton icon="quick" />
          <SmallButton icon="point" />
          <SmallButton icon="calc" />
        </div>
      </Panel>

      <Panel title="剪贴板" arrow={false} className="w-[75px]">
        <BigButton icon="paste" lines={['粘贴']} arrow className="w-[48px]" />
        <div className="ml-1 flex flex-col pt-1">
          <SmallButton icon="cut" />
          <SmallButton icon="copyclip" />
        </div>
      </Panel>
    </div>
  );
}

function DocTabs() {
  return (
    <div className="flex h-[29px] items-end border-t border-b-4 border-t-[#8a8a8a] border-b-[#5f5f5f] bg-[#383838] pl-[14px]">
      <div className="flex h-[22px] w-[142px] items-center bg-linear-to-b from-[#808080] to-[#5f5f5f] pr-[24px] pl-[18px] [clip-path:path('M0_22C9_22_7_0_14_0H125C133_0_132_22_142_22Z')]">
        <button className="text-[12px] text-[#f4f4f4]">Drawing1*</button>
        <button aria-label="关闭" className="ml-auto">
          <svg width="8" height="8" className="block">
            <path d="M1 1L7 7M7 1L1 7" stroke="#3c3c3c" strokeWidth="1.500" />
          </svg>
        </button>
      </div>
      <button aria-label="新图形" className="-ml-1 mb-1 flex h-[14px] w-[22px] items-center justify-center rounded-tr-[8px] rounded-br-[2px] rounded-bl-[8px] border border-[#6a6a6a] bg-[#515151]">
        <svg width="8" height="8">
          <path d="M4 0V8M0 4H8" stroke="#c8c8c8" strokeWidth="1.800" />
        </svg>
      </button>
    </div>
  );
}

// Everything inside the model group is positioned relative to the UCS origin.
function Model() {
  return (
    <svg className="absolute inset-0 h-full w-full">
      <defs>
        <pattern id="grid" width={GRID_W} height={GRID_H} patternUnits="userSpaceOnUse">
          {MINOR.map((k) => {
            const x = (k * GRID_W) / 5;
            return (
              <path
                key={k}
                d={`M${x} 0L${x + GRID_W} ${GRID_H}M${x + GRID_W} 0L${x} ${GRID_H}`}
                stroke="#272e38"
              />
            );
          })}
          <path d={`M0 0L${GRID_W} ${GRID_H}M${GRID_W} 0L0 ${GRID_H}`} stroke="#343c49" />
        </pattern>
        <linearGradient id="side">
          <stop offset="0.5" stopColor="#333" />
          <stop offset="0.63" stopColor="#4c4c4c" />
          <stop offset="0.68" stopColor="#888a88" />
          <stop offset="0.74" stopColor="#c8cac8" />
          <stop offset="0.85" stopColor="#fff" />
        </linearGradient>
        <linearGradient id="disc" x2="1" y2="1">
          <stop offset="0" stopColor="#fff" />
          <stop offset="1" stopColor="#c6ccd8" />
        </linearGradient>
      </defs>
      <g transform="translate(904 635)" fill="none">
        <rect x="-2000" y="-2000" width="5000" height="4000" fill="url(#grid)" />
        <path d="M0 0L-1732 -1000" stroke="#2b7a2b" />
        <path d="M0 0L1732 -1000" stroke="#7c2529" />

        <path
          d="M-181 -312V-112A116 67 0 0 0 51 -112V-312Z"
          fill="url(#side)"
          stroke="#fff"
          strokeWidth="1.500"
        />
        <ellipse cx="-65" cy="-312" rx="116" ry="67" fill="#333" stroke="#fff" strokeWidth="1.500" />
        <path d="M-146.500 -264V-65" stroke="#fff" />

        <path d="M0 0L-34 -20" stroke="#62cc62" strokeWidth="5" />
        <path d="M0 0L35 -20" stroke="#b05252" strokeWidth="5" />
        <path d="M0 0V-40" stroke="#3f64a2" strokeWidth="6" />
        <rect x="-2" y="-40" width="3" height="3" fill="#9fd0ff" />
        <g className="font-['Open_Sans'] text-[17px] font-light" textAnchor="middle">
          <text x="5" y="-44" fill="#0a62ff">Z</text>
          <text x="38" y="-24" fill="#ee2a2a">X</text>
          <text x="-32" y="-24" fill="#18b018">Y</text>
        </g>

        <g transform="translate(317.500 4.500)">
          <path d="M-25 14L50 -29" stroke="#f08080" />
          <path d="M-50 -29L25 14" stroke="#80f080" />
          <path d="M0 -57V30" stroke="#7a7af0" />
          <rect x="-8" y="-8" width="16" height="16" fill="#212830" stroke="#fff" />
          <g className="font-['DejaVu_Sans_Mono'] text-[13px]" textAnchor="middle">
            <text x="11" y="-53" fill="#8088d8">Z</text>
            <text x="58" y="-13" fill="#c89868">X</text>
            <text x="-42" y="-13" fill="#58c858">Y</text>
          </g>
        </g>

        <path
          d="M679.500 -130.500Q680 -143 684.500 -151L693 -143Q690 -138 691.500 -132.500L679.500 -130.500L682 -133Q688 -143 684.500 -151M693 -143L722 -136.500Q724 -131 720 -126L691.500 -133M694 -142L691 -133M713 -138L711 -128.500M716 -137L713 -127.500M719 -136L717 -127"
          stroke="#ff8a10"
          strokeWidth="1.200"
        />

        <rect x="-348.500" y="-488.500" width="1146" height="576" rx="1" stroke="#ff2010" strokeWidth="3" />
      </g>
    </svg>
  );
}

function ViewCube() {
  return (
    <div className="absolute top-[40px] right-[13px] flex w-[140px] flex-col items-center text-[#6a6d78]">
      <svg width="140" height="125" viewBox="0 0 140 125" className="font-['Noto_Sans_CJK_SC']">
        <ellipse cx="70" cy="69" rx="56" ry="36" fill="none" stroke="#4a515b" strokeWidth="13" opacity="0.9" />
        <g fill="#a9adb2" fontSize="19" textAnchor="middle">
          <text transform="translate(32 47) rotate(30)" fontSize="14">北</text>
          <text transform="translate(111 46) rotate(-30)" fontSize="14">东</text>
          <text transform="translate(27 100) rotate(-32)">西</text>
          <text transform="translate(115 99) rotate(32)">南</text>
        </g>
        <path d="M70 5L105 22L70 42L35 22Z" fill="#b4b4b4" />
        <path d="M35 22L70 42V82L37 60Z" fill="#a6a6a6" />
        <path d="M105 22L70 42V82L103 60Z" fill="#aeaeae" />
        <path d="M35 22L70 42L105 22M70 42V82" fill="none" stroke="#60656a" />
        <path d="M70 34L77 38V46L70 50L63 46V38Z" fill="#8e979e" opacity="0.6" />
        <g fill="#4c5258" fontSize="19" textAnchor="middle">
          <text transform="translate(72 28) rotate(-30)" fontSize="16">上</text>
          <text transform="translate(52 58) skewY(30)">左</text>
          <text transform="translate(88 58) skewY(-30)">前</text>
        </g>
      </svg>
      <button className="mt-1 flex h-[18px] w-[48px] items-center justify-center gap-[6px] rounded-[3px] border border-[#7d818c] bg-[#9b9faa] font-['Liberation_Sans'] text-[11px]">
        WCS
        <svg width="8" height="5">
          <path d="M0.500 0.500H7.500L4 4.500Z" fill="none" stroke="#7a7e89" />
        </svg>
      </button>
    </div>
  );
}

function NavBar() {
  return (
    <div className="absolute top-[212px] right-[4px] flex h-[212px] w-[32px] rounded-[3px] border border-[#6c7276] bg-[#5a6063]">
      <svg width="30" height="210" viewBox="0 0 30 210" fill="none" stroke="#3b4146" strokeWidth="1.200">
        <circle cx="25" cy="5" r="4" />
        <path d="M23 3L27 7M27 3L23 7" />
        <path d="M15 19H26V30A11 11 0 1 1 15 19Z" />
        <circle cx="15" cy="30" r="6" />
        <path d="M13 49H18L15.500 51Z" fill="#3b4146" stroke="none" />
        <path d="M2 56H28" stroke="#6c7276" />
        <path d="M10 83Q5 76 4 72Q6 70 10 74L8 64Q10 62 11 65L13 71L13 61Q15 59 16 62L17 70L19 62Q21 60 21 64L21 72L24 66Q26 65 26 68Q24 78 21 83Z" />
        <path d="M4 90L18 104M18 90L4 104M4 95V90H9M14 90H18V95M4 99V104H9" />
        <circle cx="19" cy="103" r="5" fill="#5a6063" />
        <path d="M22 107L27 112" strokeWidth="2.500" />
        <path d="M13 119H18L15.500 121Z" fill="#3b4146" stroke="none" />
        <path d="M13 148V134H10L15 127L20 134H17V148Z" />
        <path d="M9 136Q3 138 4 140Q8 146 22 143Q29 140 20 136M4 142L9 138V146Z" />
        <path d="M13 157H18L15.500 159Z" fill="#3b4146" stroke="none" />
        <path d="M2 164H28" stroke="#6c7276" />
        <path d="M4 169H10V175H4ZM12 169H18V175H12ZM20 169H26V175H20ZM4 178H20V191H4Z" />
        <path d="M9 180L16 184L9 189Z" fill="#3b4146" />
        <circle cx="25" cy="205" r="4" />
        <path d="M23 204H27M23 206H27" />
      </svg>
    </div>
  );
}

function CommandLine() {
  return (
    <div className="absolute right-[376px] bottom-px left-[384px] flex h-[26px] border border-[#6f7478]">
      <div className="flex w-[53px] items-center bg-linear-to-b from-[#5a5d60] to-[#3a3d40] pl-[3px]">
        <svg width="6" height="18">
          <path d="M1.500 0V18M4.500 0V18" stroke="#aaa" strokeDasharray="1.500 1.500" strokeWidth="1.500" />
        </svg>
        <button aria-label="关闭" className="ml-[6px]">
          <svg width="9" height="9" className="block">
            <path d="M1 1L8 8M8 1L1 8" stroke="#d4d4d4" strokeWidth="2" />
          </svg>
        </button>
        <button aria-label="自定义" className="ml-[11px]">
          <svg width="14" height="14" className="block">
            <path d="M5 5L12 12" stroke="#c4c8cc" strokeWidth="2.500" strokeLinecap="round" />
            <path d="M1 4Q2 7 5 6Q7 4 5 1" fill="none" stroke="#c4c8cc" strokeWidth="1.800" />
          </svg>
        </button>
      </div>
      <div className="flex flex-1 items-center bg-[#bebfc1] px-[5px]">
        <svg width="15" height="15">
          <rect x="0.500" y="0.500" width="14" height="14" rx="1" fill="#a9b2bb" stroke="#5d6f80" />
          <path d="M3 4L6.500 7L3 10M8 11H12" fill="none" stroke="#222" />
        </svg>
        <svg width="6" height="3" className="ml-1">
          <path d="M0 0H6L3 3Z" fill="#555" />
        </svg>
        <input
          aria-label="命令"
          placeholder="键入命令"
          className="ml-[8px] min-w-0 flex-1 bg-transparent outline-none placeholder:text-[#7c7e80]"
        />
        <button aria-label="历史">
          <svg width="7" height="4" className="block">
            <path d="M3.500 0L7 4H0Z" fill="#222" />
          </svg>
        </button>
      </div>
    </div>
  );
}

function Viewport() {
  return (
    <main className="flex min-h-[600px] flex-1">
      <div className="relative flex-1 overflow-hidden bg-[#212830]">
        <Model />
        <button className="relative mt-[5px] ml-1 block leading-[18px] text-[#e6e6e6]">[−][西南等轴测][带边缘着色]</button>
        <ViewCube />
        <NavBar />
        <CommandLine />
      </div>
      <div className="relative w-[8px] border-r-2 border-[#111] bg-[#b6cfeb] shadow-[inset_-1px_0_0_#35c8f0]">
        <div className="absolute top-[52px] -left-[3px] flex h-[57px] w-[9px] flex-col justify-end rounded-[4px] border border-[#aab] bg-[#222c33] p-px">
          <div className="h-[30px] bg-[repeating-linear-gradient(#2fd060_0_2px,#14502a_2px_3px)]" />
        </div>
      </div>
    </main>
  );
}

function StatusCell({ className, children }: { className: string; children: ReactNode }) {
  return (
    <div className={`flex h-[26px] items-center border border-[#808080] bg-[#4c4c4c] ${className}`}>{children}</div>
  );
}

function StatusIcon({ label, on, children }: { label: string; on?: boolean; children: ReactNode }) {
  return (
    <button aria-label={label} className={on ? 'text-[#2c93ff]' : 'text-[#c4c4c4]'}>
      <svg width="16" height="16" viewBox="0 0 16 16" fill="none" stroke="currentColor" strokeWidth="1.200" className="block">
        {children}
      </svg>
    </button>
  );
}

const person = 'M8 0L9.500 6L15 13L16 16L9.500 12.500L8 15L6.500 12.500L0 16L1 13L6.500 6Z';

function StatusBar() {
  return (
    <footer className="flex h-[28px] items-start justify-between border-t border-[#777] bg-[#383838]">
      <div className="flex pl-[10px] text-[#b4b4b4]">
        <button className="h-[18px] w-[50px] bg-linear-to-b from-[#5f5f5f] to-[#8c8c8c] font-bold text-white [clip-path:polygon(0_0,100%_0,88%_100%,14%_100%)]">模型</button>
        <button className="h-[18px] w-[52px] bg-[#5c5c5c] [clip-path:polygon(0_0,100%_0,88%_100%,12%_100%)]">布局1</button>
        <button className="h-[18px] w-[54px] bg-[#5c5c5c] [clip-path:polygon(0_0,100%_0,88%_100%,12%_100%)]">布局2</button>
        <button aria-label="新建布局" className="ml-[5px] flex h-4 w-[22px] items-center justify-center rounded-tl-[8px] rounded-br-[8px] border border-[#666] bg-[#4c4c4c]">
          <svg width="8" height="8">
            <path d="M4 0V8M0 4H8" stroke="#c8c8c8" strokeWidth="1.800" />
          </svg>
        </button>
      </div>
      <div className="relative flex pr-px text-white">
        <StatusCell className="mr-px w-[152px] justify-end pr-[5px] whitespace-nowrap">4.5241, -4.7398, 0.0000</StatusCell>
        <StatusCell className="mr-px w-[30px] justify-center font-medium whitespace-nowrap"><button>模型</button></StatusCell>
        <StatusCell className="mr-px w-[65px] justify-between px-1">
          <StatusIcon label="栅格" on><path d="M2 0V16M5 0V16M8 0V16M11 0V16M14 0V16M0 3H16M0 13H16" /><path d="M0 8H16" strokeDasharray="1 1" /></StatusIcon>
          <StatusIcon label="捕捉"><path d="M1 1.500H16M1 4.500H16M1 7.500H16M1 10.500H16M1 13.500H16" strokeWidth="1" strokeDasharray="1 2" stroke="#e6e6e6" /></StatusIcon>
          <Arrow big />
        </StatusCell>
        <StatusCell className="w-[103px] justify-between px-1">
          <StatusIcon label="正交"><path d="M3 2V14H16M3 9H8V14" /></StatusIcon>
          <StatusIcon label="极轴" on><circle cx="7" cy="8" r="6.500" strokeWidth="1.600" /><path d="M7 8L13 2M7 8H16" /></StatusIcon>
          <Arrow big />
          <StatusIcon label="等轴测"><path d="M0 0L16 16M8 0V16" /></StatusIcon>
          <Arrow big />
        </StatusCell>
        <StatusCell className="mr-px w-[65px] justify-between border-l-0 px-1">
          <StatusIcon label="追踪" on><path d="M14 2L1 14H16" strokeWidth="1.600" /><circle cx="8" cy="8" r="2" fill="currentColor" /></StatusIcon>
          <StatusIcon label="对象捕捉" on><path d="M2 3H15V15H2Z" strokeWidth="1.500" /><rect x="0" y="1" width="4" height="4" fill="#00e000" stroke="#040" /></StatusIcon>
          <Arrow big />
        </StatusCell>
        <StatusCell className="mr-px w-[27px] justify-center">
          <StatusIcon label="动态 UCS" on><path d="M2 1V14H16M2 14L10 6M0 3L2 1L4 3M14 12L16 14L14 16" /><path d="M12 0L9 6H12L10 10L16 4H13L15 0Z" fill="currentColor" stroke="none" /></StatusIcon>
        </StatusCell>
        <StatusCell className="mr-px w-[111px] justify-between px-1">
          <StatusIcon label="注释可见性" on><path d={person} fill="currentColor" stroke="none" /><circle cx="12.500" cy="3.500" r="2.800" /></StatusIcon>
          <StatusIcon label="自动缩放"><path d={person} fill="currentColor" stroke="none" /><path d="M13 0L11 4H14L12 8" /></StatusIcon>
          <StatusIcon label="注释比例"><path d={person} fill="currentColor" stroke="none" /></StatusIcon>
          <button className="flex items-center gap-1">1:1 <Arrow big /></button>
        </StatusCell>
        <StatusCell className="w-[40px] justify-between border-r-0 pr-1 pl-[3px]">
          <StatusIcon label="设置"><circle cx="8" cy="8" r="3.500" strokeWidth="3" /><circle cx="8" cy="8" r="5.500" strokeWidth="2" strokeDasharray="2.160 2.160" /></StatusIcon>
          <Arrow big />
        </StatusCell>
        <StatusCell className="mr-px w-[26px] justify-center"><StatusIcon label="监视器"><path d="M8 1V15M1 8H15" strokeWidth="2" /></StatusIcon></StatusCell>
        <StatusCell className="mr-px w-[26px] justify-center"><StatusIcon label="隔离"><path d="M1 1H7V7H1ZM8 9L11 15H5Z" /><circle cx="12.500" cy="6.500" r="3" /></StatusIcon></StatusCell>
        <StatusCell className="mr-px w-[26px] justify-center"><StatusIcon label="硬件加速" on><circle cx="8" cy="8" r="7.500" fill="#00539b" /><path d="M6 11L12 6" strokeWidth="1.800" /></StatusIcon></StatusCell>
        <StatusCell className="w-[49px] justify-between px-1">
          <StatusIcon label="全屏"><path d="M0.500 2.500H15.500V13.500H0.500Z" /><path d="M8.500 4H13V8.500ZM3 7.500V12H7.500Z" fill="currentColor" stroke="none" /></StatusIcon>
          <StatusIcon label="自定义"><path d="M1 2H15M1 8H15M1 14H15" strokeWidth="1.800" /></StatusIcon>
        </StatusCell>
        <span className="pointer-events-none absolute right-[4px] bottom-[14px] text-[37px] leading-[44px] font-bold text-[#828282]">最需教育</span>
      </div>
    </footer>
  );
}

export default function App() {
  return (
    <div className="flex min-h-screen flex-col bg-[#383838] font-['Open_Sans','Noto_Sans_CJK_SC',sans-serif] text-[12px]">
      <header className="relative">
        <TitleBar />
        <MenuBar />
        <RibbonTabs />
        <button aria-label="应用程序" className="absolute top-0 left-0 flex h-[42px] w-[41px] items-center justify-center gap-[2px] border-2 border-t border-[#1c1c1c] bg-linear-to-b from-[#b5b5b5] to-[#6f6f6f]">
          <svg width="26" height="30" viewBox="0 0 26 30">
            <path d="M1 28L10 2H16L25 26L18 27L16 20L9 22L7 28Z" fill="#c4302b" />
            <path d="M10 2L13 9L8 20L1 28Z" fill="#8e1a1a" />
            <path d="M13 9L16 16L9 18Z" fill="#9a8a8a" />
            <path d="M16 2L25 26L20 24L13 6Z" fill="#dd4a42" />
          </svg>
          <svg width="7" height="4">
            <path d="M0 0H7L3.500 4Z" fill="#222" />
          </svg>
        </button>
      </header>
      <Ribbon />
      <DocTabs />
      <Viewport />
      <StatusBar />
      <div className="h-[2px] border-t border-black bg-[#9a9fa5]" />
    </div>
  );
}
